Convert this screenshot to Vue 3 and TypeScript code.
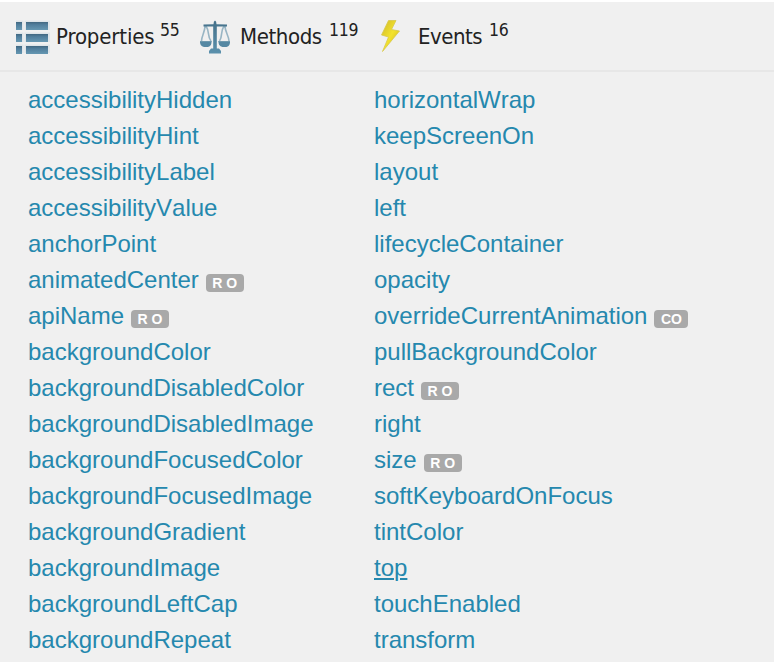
<script setup lang="ts">
interface Member {
  name: string
  badge?: string
  active?: boolean
}

const columns: Member[][] = [
  [
    { name: 'accessibilityHidden' },
    { name: 'accessibilityHint' },
    { name: 'accessibilityLabel' },
    { name: 'accessibilityValue' },
    { name: 'anchorPoint' },
    { name: 'animatedCenter', badge: 'R O' },
    { name: 'apiName', badge: 'R O' },
    { name: 'backgroundColor' },
    { name: 'backgroundDisabledColor' },
    { name: 'backgroundDisabledImage' },
    { name: 'backgroundFocusedColor' },
    { name: 'backgroundFocusedImage' },
    { name: 'backgroundGradient' },
    { name: 'backgroundImage' },
    { name: 'backgroundLeftCap' },
    { name: 'backgroundRepeat' },
  ],
  [
    { name: 'horizontalWrap' },
    { name: 'keepScreenOn' },
    { name: 'layout' },
    { name: 'left' },
    { name: 'lifecycleContainer' },
    { name: 'opacity' },
    { name: 'overrideCurrentAnimation', badge: 'CO' },
    { name: 'pullBackgroundColor' },
    { name: 'rect', badge: 'R O' },
    { name: 'right' },
    { name: 'size', badge: 'R O' },
    { name: 'softKeyboardOnFocus' },
    { name: 'tintColor' },
    { name: 'top', active: true },
    { name: 'touchEnabled' },
    { name: 'transform' },
  ],
]
</script>

<template>
  <main class="panel">
    <header class="tabs">
      <div class="tab properties">
        <svg class="icon" width="34" height="34" viewBox="0 0 34 34">
          <defs>
            <linearGradient id="bar" x1="0" y1="0" x2="0" y2="1">
              <stop offset="0" stop-color="#416781" />
              <stop offset=".35" stop-color="#517f9d" />
              <stop offset="1" stop-color="#6597b2" />
            </linearGradient>
          </defs>
          <path d="M0 .5H7.500V10H0ZM8.500 .5H34V10H8.500ZM0 12.500H7.500V22H0ZM8.500 12.500H34V22H8.500ZM0 24.500H7.500V33H0ZM8.500 24.500H34V33H8.500Z" fill="#dfe5e9" />
          <g fill="url(#bar)">
            <rect x="0" y="2" width="6" height="8" />
            <rect x="10" y="2" width="22" height="8" />
            <rect x="0" y="14" width="6" height="8" />
            <rect x="10" y="14" width="22" height="8" />
            <rect x="0" y="26" width="6" height="8" />
            <rect x="10" y="26" width="22" height="8" />
          </g>
        </svg>
        <span class="label">Properties</span><span class="count">55</span>
      </div>
      <div class="tab methods">
        <svg class="icon" width="32" height="34" viewBox="0 0 32 34">
          <defs>
            <linearGradient id="steel" x1="0" y1="0" x2="0" y2="1">
              <stop offset="0" stop-color="#447089" />
              <stop offset="1" stop-color="#5b91ad" />
            </linearGradient>
          </defs>
          <g fill="none" stroke="#98b5c4" stroke-width="1.600">
            <path d="M6 6C6 12 2.500 16 2.500 21M7 6C11 12 8 16 12 21M25 6C21 12 24 16 20.500 21M26 6C26 12 30 16 30 21" />
          </g>
          <path d="M14.500 4.300Q14.500 1 16 .5Q17.500 1 17.500 4.300L28 4.500V6.500H17.800V28.500H20L22 31V33.500H10V31L12 28.500H14.200V6.500H4.500V4.500Z" fill="url(#steel)" />
          <path d="M1 21H12.500Q13 26 9 27H5Q.5 26 1 21ZM19.500 21H31Q31.500 26 27.500 27H23.500Q19 26 19.500 21Z" fill="#5688a3" />
          <path d="M1 21.500H12.500M19.500 21.500H31" stroke="#7099ae" />
        </svg>
        <span class="label">Methods</span><span class="count">119</span>
      </div>
      <div class="tab events">
        <svg class="icon" width="20" height="34" viewBox="0 0 20 34">
          <defs>
            <linearGradient id="bolt" x1="0" y1="0" x2="1" y2="1">
              <stop offset="0" stop-color="#cdb62b" />
              <stop offset=".5" stop-color="#f3e32c" />
              <stop offset="1" stop-color="#c8ae24" />
            </linearGradient>
          </defs>
          <path d="M8.500 .5 16 .5 11.500 9.500 19.500 11 2.500 31.500 8.500 17 1.500 15Z" fill="url(#bolt)" stroke="#d8c94b" stroke-width=".8" />
        </svg>
        <span class="label">Events</span><span class="count">16</span>
      </div>
    </header>
    <div class="columns">
      <ul v-for="(column, i) in columns" :key="i" class="column">
        <li v-for="member in column" :key="member.name" class="member">
          <a :class="['link', { active: member.active }]">{{ member.name }}</a>
          <span v-if="member.badge" :class="['badge', { creation: member.badge === 'CO' }]">{{ member.badge }}</span>
        </li>
      </ul>
    </div>
  </main>
</template>

<style>
body {
  background: #f0f0f0;
  overflow: hidden;
}
</style>

<style scoped>
.panel {
  box-sizing: border-box;
  height: 662px;
  overflow: hidden;
  border-top: 2px solid #fff;
  background: #f0f0f0;
  font-family: "Liberation Sans", Arial, sans-serif;
}
.tabs {
  box-sizing: border-box;
  display: flex;
  height: 70px;
  padding: 18px 0 0 16px;
  border-bottom: 2px solid #e7e7e7;
  color: #222;
  font-family: Tahoma, "DejaVu Sans Condensed", "DejaVu Sans", sans-serif;
  font-stretch: condensed;
  font-size: 22px;
  line-height: 33px;
}
.tab {
  display: flex;
  align-items: flex-start;
  white-space: nowrap;
}
.properties { width: 183px; }
.methods { width: 181px; }
.icon { flex: none; }
.properties .label { width: 104px; margin-left: 6px; letter-spacing: -.15px; }
.methods .label { width: 89px; margin-left: 9px; letter-spacing: -.4px; }
.events .label { width: 71px; margin-left: 18px; letter-spacing: -.5px; }
.count {
  font-size: 17.500px;
  line-height: 21px;
  letter-spacing: -.3px;
}
.columns {
  display: grid;
  grid-template-columns: 346px 1fr;
  padding: 10px 0 0 28px;
}
.column {
  margin: 0;
  padding: 0;
  list-style: none;
}
.member {
  display: flex;
  height: 36px;
  font-size: 24px;
  line-height: 36px;
  font-kerning: none;
}
.link {
  color: #2588ae;
  white-space: nowrap;
}
.active {
  text-decoration: underline;
  text-decoration-thickness: 2px;
  text-underline-offset: 2px;
}
.badge {
  box-sizing: border-box;
  width: 38px;
  height: 18px;
  margin: 12px 0 0 7px;
  border-radius: 4px;
  background: #a9a9a9;
  color: #fff;
  font-size: 14px;
  font-weight: 700;
  line-height: 18px;
  text-align: center;
}
.creation { width: 34px; }
</style>
